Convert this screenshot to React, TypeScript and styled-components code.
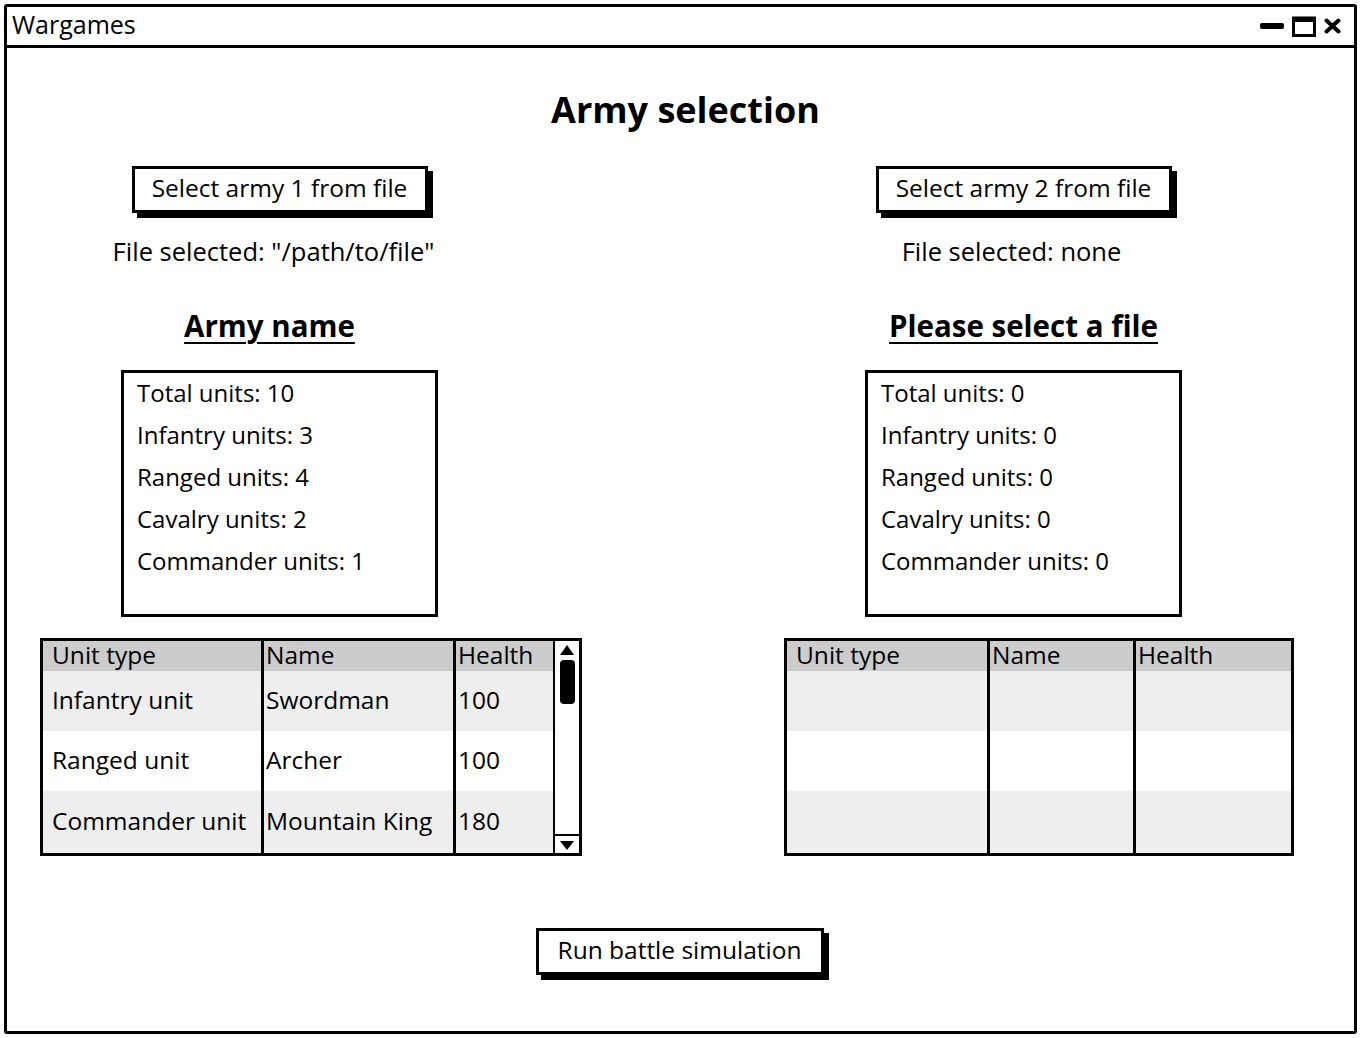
import React from "react";
import styled, { createGlobalStyle } from "styled-components";

const GlobalStyle = createGlobalStyle`
  html, body {
    margin: 0;
    padding: 0;
    background: #fff;
  }
  body {
    font-family: "Open Sans", "Liberation Sans", sans-serif;
    color: #000;
  }
  * {
    box-sizing: border-box;
  }
`;

interface UnitRow {
  type: string;
  name: string;
  health: string;
}

interface ArmyInfo {
  buttonLabel: string;
  file: string;
  fileShift: number;
  title: string;
  titleShift: number;
  stats: string[];
  units: UnitRow[];
  columns: number[];
  scroll: boolean;
}

const armies: ArmyInfo[] = [
  {
    buttonLabel: "Select army 1 from file",
    file: 'File selected: "/path/to/file"',
    fileShift: 12,
    title: "Army name",
    titleShift: 20,
    stats: [
      "Total units: 10",
      "Infantry units: 3",
      "Ranged units: 4",
      "Cavalry units: 2",
      "Commander units: 1",
    ],
    units: [
      { type: "Infantry unit", name: "Swordman", health: "100" },
      { type: "Ranged unit", name: "Archer", health: "100" },
      { type: "Commander unit", name: "Mountain King", health: "180" },
    ],
    columns: [218, 192, 100],
    scroll: true,
  },
  {
    buttonLabel: "Select army 2 from file",
    file: "File selected: none",
    fileShift: 24,
    title: "Please select a file",
    titleShift: 0,
    stats: [
      "Total units: 0",
      "Infantry units: 0",
      "Ranged units: 0",
      "Cavalry units: 0",
      "Commander units: 0",
    ],
    units: [
      { type: "", name: "", health: "" },
      { type: "", name: "", health: "" },
      { type: "", name: "", health: "" },
    ],
    columns: [200, 146, 158],
    scroll: false,
  },
];

const Window = styled.div`
  margin: 4px 3px 4px 4px;
  height: 1030px;
  border: 3px solid #000;
  border-radius: 3px;
  display: flex;
  flex-direction: column;
`;

const TitleBar = styled.div`
  height: 41px;
  border-bottom: 3px solid #000;
  display: flex;
  align-items: center;
  justify-content: space-between;
  padding: 0 13px 0 5px;
`;

const TitleText = styled.div`
  font-size: 25px;
  margin-top: -4px;
`;

const Controls = styled.div`
  display: flex;
  align-items: center;
  gap: 8px;
`;

const Body = styled.div`
  flex: 1;
  display: flex;
  flex-direction: column;
  align-items: center;
`;

const Heading = styled.h1`
  margin: 42px 0 0 10px;
  font-size: 36px;
  line-height: 40px;
  font-weight: 700;
  text-align: center;
`;

const Columns = styled.div`
  align-self: stretch;
  margin: 36px 0 0 33px;
  display: grid;
  grid-template-columns: 542px 510px;
  column-gap: 202px;
`;

const Column = styled.div`
  display: flex;
  flex-direction: column;
  align-items: flex-start;
`;

const Summary = styled.div`
  margin-left: 81px;
  width: 317px;
  display: flex;
  flex-direction: column;
  align-items: center;
`;

const Button = styled.div<{ $width: number }>`
  width: ${(p) => p.$width}px;
  height: 47px;
  border: 3px solid #000;
  background: #fff;
  box-shadow: 5px 5px 0 #000;
  display: flex;
  align-items: center;
  justify-content: center;
  font-size: 24.5px;
  padding-bottom: 4px;
  white-space: nowrap;
`;

const FileText = styled.div<{ $shift: number }>`
  margin: 22px ${(p) => p.$shift}px 0 0;
  font-size: 25.5px;
  line-height: 32px;
  white-space: nowrap;
`;

const ArmyTitle = styled.h2<{ $shift: number }>`
  margin: 41px ${(p) => p.$shift}px 0 0;
  font-size: 29.5px;
  line-height: 36px;
  font-weight: 700;
  text-decoration: underline;
  text-decoration-thickness: 2px;
  text-underline-offset: 5px;
  white-space: nowrap;
`;

const StatsBox = styled.div`
  margin-top: 26px;
  width: 317px;
  height: 247px;
  border: 3px solid #000;
  padding: 0 0 0 13px;
  align-self: stretch;
`;

const StatLine = styled.div`
  font-size: 24px;
  line-height: 42px;
  margin-top: -1px;
  margin-bottom: 1px;
  white-space: nowrap;
`;

const Table = styled.div<{ $width: number }>`
  margin-top: 21px;
  width: ${(p) => p.$width}px;
  height: 218px;
  border: 3px solid #000;
  display: flex;
`;

const Grid = styled.div<{ $cols: string }>`
  flex: 1;
  display: grid;
  grid-template-columns: ${(p) => p.$cols};
  grid-template-rows: 30px 60px 60px 1fr;
`;

const Cell = styled.div<{ $shade: string; $first: boolean }>`
  background: ${(p) => p.$shade};
  border-left: ${(p) => (p.$first ? "none" : "3px solid #000")};
  padding-left: ${(p) => (p.$first ? "9px" : "2px")};
  padding-bottom: 3px;
  display: flex;
  align-items: center;
  font-size: 24.5px;
  line-height: 30px;
  white-space: nowrap;
`;

const HeadCell = styled(Cell)`
  padding-bottom: 2px;
`;

const Scrollbar = styled.div`
  width: 26px;
  border-left: 2px solid #000;
  display: flex;
  flex-direction: column;
  align-items: center;
`;

const Thumb = styled.div`
  width: 15px;
  height: 44px;
  margin-top: 3px;
  background: #000;
  border-radius: 4px;
`;

const Track = styled.div`
  flex: 1;
`;

const ArrowDown = styled.div`
  align-self: stretch;
  border-top: 2px solid #000;
  display: flex;
  justify-content: center;
  padding: 3px 0 2px;
`;

const RunButton = styled(Button)`
  margin-top: 72px;
  margin-left: -2px;
`;

const shades = ["#cccccc", "#eeeeee", "#ffffff", "#eeeeee"];

const WindowControls = () => (
  <Controls>
    <svg width="24" height="8" viewBox="0 0 24 8">
      <rect x="0" y="1" width="24" height="6" rx="2" fill="#000" />
    </svg>
    <svg width="24" height="21" viewBox="0 0 24 21">
      <rect x="1.5" y="2" width="21" height="17.5" fill="none" stroke="#000" strokeWidth="3" />
      <rect x="1" y="1" width="22" height="5" fill="#000" />
    </svg>
    <svg width="17" height="16" viewBox="0 0 17 16">
      <path d="M2.5 2.5 L14.5 13.5 M14.5 2.5 L2.5 13.5" stroke="#000" strokeWidth="4" strokeLinecap="round" />
    </svg>
  </Controls>
);

const UnitTable = ({ army, width }: { army: ArmyInfo; width: number }) => {
  const cols = army.columns.map((c, i) => (i === army.columns.length - 1 ? "1fr" : `${c}px`)).join(" ");
  return (
    <Table $width={width}>
      <Grid $cols={cols}>
        <HeadCell $shade={shades[0]} $first>Unit type</HeadCell>
        <HeadCell $shade={shades[0]} $first={false}>Name</HeadCell>
        <HeadCell $shade={shades[0]} $first={false}>Health</HeadCell>
        {army.units.map((u, i) => (
          <React.Fragment key={i}>
            <Cell $shade={shades[i + 1]} $first>{u.type}</Cell>
            <Cell $shade={shades[i + 1]} $first={false}>{u.name}</Cell>
            <Cell $shade={shades[i + 1]} $first={false}>{u.health}</Cell>
          </React.Fragment>
        ))}
      </Grid>
      {army.scroll && (
        <Scrollbar>
          <svg width="18" height="14" viewBox="0 0 18 14" style={{ marginTop: 2 }}>
            <path d="M2 12 L9 2 L16 12 Z" fill="#000" />
          </svg>
          <Thumb />
          <Track />
          <ArrowDown>
            <svg width="18" height="12" viewBox="0 0 18 12">
              <path d="M2 2 L16 2 L9 11 Z" fill="#000" />
            </svg>
          </ArrowDown>
        </Scrollbar>
      )}
    </Table>
  );
};

const ArmyColumn = ({ army, tableWidth }: { army: ArmyInfo; tableWidth: number }) => (
  <Column>
    <Summary>
      <Button $width={296}>{army.buttonLabel}</Button>
      <FileText $shift={army.fileShift}>{army.file}</FileText>
      <ArmyTitle $shift={army.titleShift}>{army.title}</ArmyTitle>
      <StatsBox>
        {army.stats.map((s) => (
          <StatLine key={s}>{s}</StatLine>
        ))}
      </StatsBox>
    </Summary>
    <UnitTable army={army} width={tableWidth} />
  </Column>
);

const App = () => {
  return (
    <>
      <GlobalStyle />
      <Window>
        <TitleBar>
          <TitleText>Wargames</TitleText>
          <WindowControls />
        </TitleBar>
        <Body>
          <Heading>Army selection</Heading>
          <Columns>
            <ArmyColumn army={armies[0]} tableWidth={542} />
            <ArmyColumn army={armies[1]} tableWidth={510} />
          </Columns>
          <RunButton $width={288}>Run battle simulation</RunButton>
        </Body>
      </Window>
    </>
  );
};

export default App;
